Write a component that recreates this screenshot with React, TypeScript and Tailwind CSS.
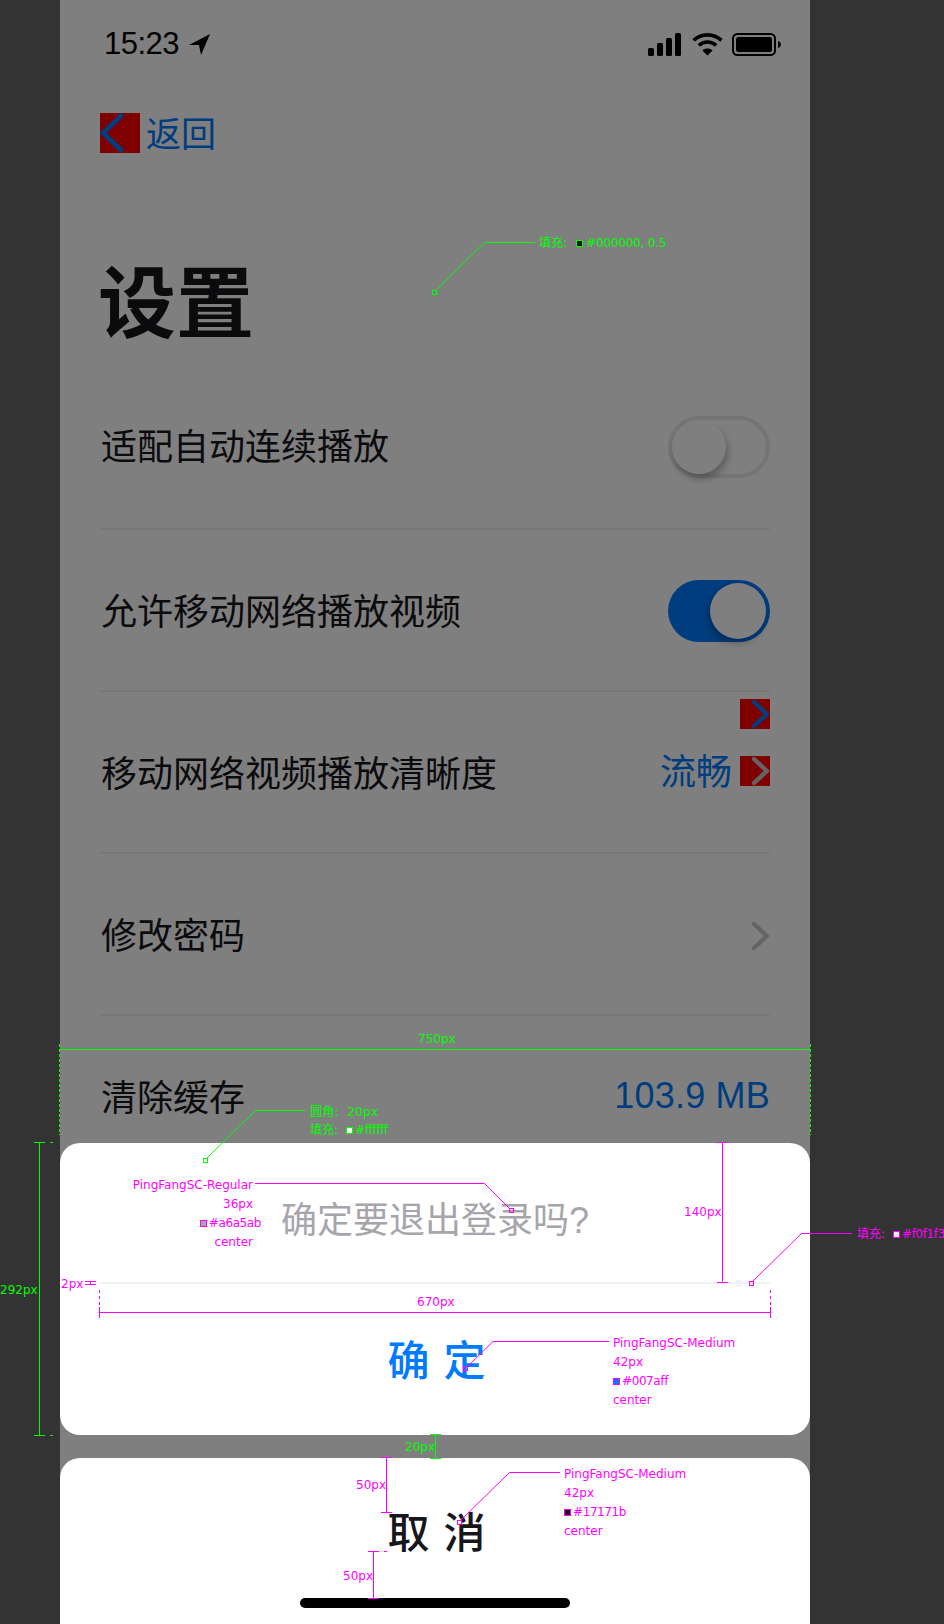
import React from 'react';

const CJK = "font-['Liberation_Sans','Noto_Sans_CJK_SC',sans-serif]";

function Chevron({ color }: { color: string }) {
  return (
    <svg width="30" height="30" viewBox="0 0 30 30" fill="none">
      <polyline points="14,3 27,15 14,27" stroke={color} strokeWidth="4.4" strokeLinecap="round" strokeLinejoin="round" />
    </svg>
  );
}

function StatusIcons() {
  return (
    <div className="flex items-center">
      <svg width="34" height="23" viewBox="0 0 34 23" fill="#000">
        <rect x="0" y="15" width="6" height="8" rx="1.5" />
        <rect x="9" y="10" width="6" height="13" rx="1.5" />
        <rect x="18" y="5" width="6" height="18" rx="1.5" />
        <rect x="27" y="0" width="6" height="23" rx="1.5" />
      </svg>
      <svg className="ml-[10px]" width="31" height="24" viewBox="0 0 31 24" fill="none" stroke="#000" strokeWidth="3.6">
        <path d="M1.6 8.4C9.4 1 21.6 1 29.4 8.4" />
        <path d="M6.8 13.4C11.8 8.8 19.2 8.8 24.2 13.4" />
        <path d="M15.5 23.6L10.4 18.4C13.4 15.8 17.6 15.8 20.6 18.4Z" fill="#000" stroke="none" />
      </svg>
      <svg className="ml-[9px]" width="49" height="23" viewBox="0 0 49 23" fill="none">
        <rect x="1" y="1" width="42" height="21" rx="4.5" stroke="#000" strokeWidth="2" />
        <rect x="4" y="4" width="36" height="15" rx="2.5" fill="#000" />
        <path d="M46 8C48 8.6 49 10 49 11.5C49 13 48 14.4 46 15Z" fill="#000" />
      </svg>
    </div>
  );
}

function Row({ label, first, children }: { label: string; first?: boolean; children?: React.ReactNode }) {
  return (
    <div className={`flex items-center justify-between border-b-2 border-[#f0f1f3] text-[36px] text-[#17171b] ${first ? 'h-[163px]' : 'h-[162px]'}`}>
      <span className={first ? 'ml-[1px]' : 'ml-[1px] pt-[6px]'}>{label}</span>
      {children}
    </div>
  );
}

// Hex value with its little colour square, as in the hand-off notes
function Hex({ value, swatch }: { value: string; swatch: string }) {
  return (
    <span className="flex items-center gap-[2px]">
      <span className={`h-[7px] w-[7px] border ${swatch}`} />
      <span className="tracking-[-0.4px]">{value}</span>
    </span>
  );
}

// Measurement marks from the design hand-off, drawn on top of the page
function Annotations() {
  const note = `absolute whitespace-nowrap text-[12px] leading-[16px]`;
  const block = `absolute flex flex-col whitespace-nowrap text-[12px] leading-[19px]`;
  return (
    <div className="pointer-events-none absolute inset-0 font-['DejaVu_Sans','Noto_Sans_CJK_SC',sans-serif]">
      <svg className="absolute inset-0" width="944" height="1624" fill="none" strokeWidth="1">
        <g stroke="#00ff00">
          <path d="M436 290L484.5 242.5H535" />
          <rect x="432.5" y="290.5" width="4" height="4" />
          <path d="M59.5 1049.5H810.5" />
          <path d="M59.5 1044V1135M810.5 1044V1135" strokeDasharray="3 2" />
          <path d="M207 1158L255.5 1110.5H305" />
          <rect x="203.5" y="1158.5" width="4" height="4" />
          <path d="M39.5 1143V1435M34 1142.5H45M34 1435.5H45M50 1142.5H53M50 1435.5H53" />
          <path d="M435.5 1434V1458M430 1434.5H441M430 1458.5H441" />
        </g>
        <g stroke="#ff00ff">
          <path d="M255 1183.5H484.5L510 1209" />
          <rect x="509.5" y="1208.5" width="4" height="4" />
          <path d="M99.5 1307V1318M770.5 1307V1318M99.5 1312.5H770.5" />
          <path d="M99.5 1290V1305M770.5 1290V1305" strokeDasharray="3 3" />
          <path d="M85 1281.5H96M85 1284.5H96M90.5 1281V1285" />
          <path d="M722.5 1142V1282M717 1142.5H728M717 1282.5H728" />
          <path d="M753 1281L801.5 1233.5H852" />
          <rect x="749.5" y="1281.5" width="4" height="4" />
          <path d="M609 1341.5H493L467 1367" />
          <rect x="463.5" y="1366.5" width="4" height="4" />
          <path d="M386.5 1457.5V1512M381 1457.5H392M381 1512.5H392" />
          <path d="M373.5 1551V1598M368 1551.5H379M368 1598.5H379M384 1551.5H387" />
          <path d="M560 1472.5H509.5L461 1520" />
          <rect x="457.5" y="1520.5" width="4" height="4" />
        </g>
      </svg>

      <div className="text-[#00ff00]">
        <div className={`${note} left-[539px] top-[235px] flex items-center gap-[9px]`}>
          <span>填充:</span>
          <span className="flex items-center gap-[3px]">
            <span className="h-[7px] w-[7px] border border-[#00ff00] bg-black/80" />
            <span className="tracking-[-0.2px]">#000000, 0.5</span>
          </span>
        </div>
        <span className={`${note} left-[418px] top-[1031px]`}>750px</span>
        <div className={`${note} left-[310px] top-[1104px] flex flex-col gap-[2px]`}>
          <span className="tracking-[0.3px]">圆角:&nbsp;&nbsp;20px</span>
          <span className="flex items-center gap-[8px]">
            <span>填充:</span>
            <Hex value="#ffffff" swatch="border-[#00ff00] bg-white" />
          </span>
        </div>
        <span className={`${note} left-0 top-[1282px]`}>292px</span>
        <span className={`${note} left-[405px] top-[1439px]`}>20px</span>
      </div>

      <div className="text-[#ff00ff]">
        <div className={`${block} left-[135px] top-[1176px] w-[118px] items-end`}>
          <span>PingFangSC-Regular</span>
          <span>36px</span>
          <span className="-mr-[8px]">
            <Hex value="#a6a5ab" swatch="border-[#ff00ff] bg-[#a6a5ab]" />
          </span>
          <span>center</span>
        </div>
        <span className={`${note} left-[61px] top-[1276px]`}>2px</span>
        <span className={`${note} left-[417px] top-[1294px]`}>670px</span>
        <span className={`${note} left-[684px] top-[1204px]`}>140px</span>
        <div className={`${note} left-[857px] top-[1226px] flex items-center gap-[8px]`}>
          <span>填充:</span>
          <Hex value="#f0f1f3" swatch="border-[#ff00ff] bg-[#f0f1f3]" />
        </div>
        <div className={`${block} left-[613px] top-[1334px]`}>
          <span>PingFangSC-Medium</span>
          <span>42px</span>
          <Hex value="#007aff" swatch="border-[#ff00ff] bg-[#007aff]" />
          <span>center</span>
        </div>
        <span className={`${note} left-[356px] top-[1477px]`}>50px</span>
        <span className={`${note} left-[343px] top-[1568px]`}>50px</span>
        <div className={`${block} left-[564px] top-[1465px]`}>
          <span>PingFangSC-Medium</span>
          <span>42px</span>
          <Hex value="#17171b" swatch="border-[#ff00ff] bg-[#17171b]" />
          <span>center</span>
        </div>
      </div>
    </div>
  );
}

export default function App() {
  return (
    <div className={`relative h-[1624px] w-[944px] overflow-hidden bg-[#333333] ${CJK}`}>
      <div className="relative ml-[60px] h-full w-[750px] overflow-hidden bg-white">
        {/* Status bar */}
        <div className="flex h-[88px] items-start justify-between pl-[44px] pr-[29px] pt-[32px]">
          <div className="flex items-center">
            <span className="text-[31px] leading-[24px] tracking-[-0.5px] text-black">15:23</span>
            <svg className="ml-[10px]" width="21" height="21" viewBox="0 0 21 21" fill="#000">
              <path d="M0 11L21 0L12 21L10 11Z" />
            </svg>
          </div>
          <StatusIcons />
        </div>

        {/* Back */}
        <div className="flex h-[90px] items-center pl-[40px]">
          <div className="h-[40px] w-[40px] bg-[#ff0000]">
            <svg width="40" height="40" viewBox="0 0 40 40" fill="none">
              <polyline points="21,3 3,20 21,37" stroke="#007aff" strokeWidth="5" strokeLinecap="round" strokeLinejoin="round" />
            </svg>
          </div>
          <span className="ml-[6px] pt-[4px] text-[35px] leading-[40px] text-[#007aff]">返回</span>
        </div>

        {/* Title */}
        <div className="flex h-[189px] items-center px-[38px] pt-[64px]">
          <h1 className="text-[78px] font-bold leading-none text-[#17171b]">设置</h1>
        </div>

        {/* Settings rows */}
        <div className="mx-[40px]">
          <Row label="适配自动连续播放" first>
            <div className="mb-[2px] flex h-[62px] w-[102px] items-center rounded-full border-4 border-[#e9e9eb] bg-white">
              <div className="h-[54px] w-[54px] rounded-full bg-white shadow-[2px_5px_7px_rgba(0,0,0,0.28)]" />
            </div>
          </Row>
          <Row label="允许移动网络播放视频">
            <div className="mt-[2px] flex h-[62px] w-[102px] items-center justify-end rounded-full bg-[#007aff] pr-[4px]">
              <div className="h-[56px] w-[56px] rounded-full bg-white shadow-[-2px_4px_8px_rgba(0,0,0,0.3)]" />
            </div>
          </Row>
          <div className="relative">
            <Row label="移动网络视频播放清晰度">
              <div className="flex items-center gap-[8px]">
                <span className="pt-[2px] text-[#007aff]">流畅</span>
                <div className="mb-[2px] h-[30px] w-[30px] bg-[#ff0000]">
                  <Chevron color="#c8c8cc" />
                </div>
              </div>
            </Row>
            <div className="absolute right-0 top-[7px] h-[30px] w-[30px] bg-[#ff0000]">
              <Chevron color="#007aff" />
            </div>
          </div>
          <Row label="修改密码">
            <div className="mt-[4px]">
              <Chevron color="#c8c8cc" />
            </div>
          </Row>
          <Row label="清除缓存">
            <span className="tracking-[0.2px] text-[#007aff]">103.9 MB</span>
          </Row>
        </div>

        {/* Dim layer */}
        <div className="absolute inset-0 bg-black/50" />

        {/* Action sheet */}
        <div className="absolute inset-x-0 bottom-0 top-[1143px] flex flex-col gap-[23px]">
          <div className="flex h-[292px] flex-col rounded-[20px] bg-white">
            <div className="mx-[40px] flex h-[141px] items-center justify-center border-b-2 border-[#f0f1f3] pt-[17px] text-[36px] text-[#a6a5ab]">
              确定要退出登录吗?
            </div>
            <div className="flex flex-1 items-center justify-center pt-[3px] indent-[17px] text-[42px] font-medium tracking-[14px] text-[#007aff]">
              确定
            </div>
          </div>
          <div className="flex flex-1 flex-col items-center rounded-t-[20px] bg-white pt-[51px]">
            <div className="indent-[17px] text-[42px] font-medium leading-[50px] tracking-[14px] text-[#17171b]">取消</div>
            <div className="mt-[39px] h-[10px] w-[270px] rounded-full bg-black" />
          </div>
        </div>
      </div>

      <Annotations />
    </div>
  );
}
